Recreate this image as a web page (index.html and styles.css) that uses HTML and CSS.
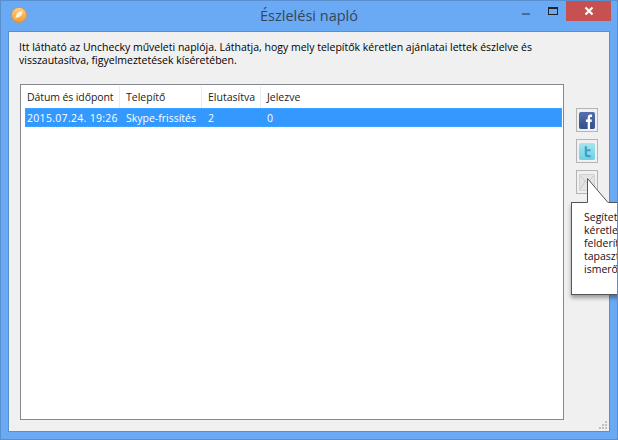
FILE: index.html
```html
<!DOCTYPE html>
<html lang="hu">
<head>
<meta charset="utf-8">
<title>Észlelési napló</title>
<link rel="stylesheet" href="styles.css">
</head>
<body>
<div class="window">
  <header class="titlebar">
    <svg class="app-icon" width="18" height="18" viewBox="0 0 18 18">
      <defs>
        <linearGradient id="org" x1="0" y1="0" x2="0" y2="1">
          <stop offset="0" stop-color="#fcd08a"/>
          <stop offset="1" stop-color="#f29a30"/>
        </linearGradient>
      </defs>
      <circle cx="9" cy="9" r="7.6" fill="url(#org)" stroke="#cf9148" stroke-width="0.8"/>
      <path d="M5.5 12.5C5.5 8 8 5.5 12.5 5C12.6 9 10.5 11.5 7 11.5L5.5 12.8Z" fill="#fdf0d8"/>
    </svg>
    <h1 class="title">Észlelési napló</h1>
    <div class="controls">
      <span class="ctl-min"></span>
      <span class="ctl-max"></span>
      <span class="ctl-close">
        <svg width="10" height="10" viewBox="0 0 10 10"><path d="M1.5 1.5L8.5 8.5M8.5 1.5L1.5 8.5" stroke="#fff" stroke-width="2.2"/></svg>
      </span>
    </div>
  </header>
  <main class="content">
    <p class="intro">Itt látható az Unchecky műveleti naplója. Láthatja, hogy mely telepítők kéretlen ajánlatai lettek észlelve és<br>visszautasítva, figyelmeztetések kíséretében.</p>
    <div class="body-row">
      <div class="list">
        <div class="list-head">
          <span class="col c1"><span class="date-head">Dátum és időpont</span></span>
          <span class="col c2">Telepítő</span>
          <span class="col c3">Elutasítva</span>
          <span class="col c4">Jelezve</span>
        </div>
        <div class="list-row">
          <span class="cell c1">2015.07.24. 19:26</span>
          <span class="cell c2">Skype-frissítés</span>
          <span class="cell c3">2</span>
          <span class="cell c4">0</span>
        </div>
      </div>
      <div class="social">
        <div class="social-btn">
          <svg width="16" height="17" viewBox="0 0 18 18" preserveAspectRatio="none">
            <defs><linearGradient id="fb" x1="0" y1="0" x2="0" y2="1"><stop offset="0" stop-color="#5470ac"/><stop offset="1" stop-color="#324f8e"/></linearGradient></defs>
            <rect width="18" height="18" rx="2" fill="url(#fb)"/>
            <path d="M9.8 18V10.6H7.8V7.9H9.8V6C9.8 3.8 11 2.7 13 2.7H14.6V5.3H13.5C12.7 5.3 12.4 5.7 12.4 6.4V7.9H14.5L14.2 10.6H12.4V18Z" fill="#fff"/>
          </svg>
        </div>
        <div class="social-btn">
          <svg width="16" height="17" viewBox="0 0 18 18" preserveAspectRatio="none">
            <defs><linearGradient id="tw" x1="0" y1="0" x2="0" y2="1"><stop offset="0" stop-color="#a5e5ee"/><stop offset="1" stop-color="#6fd0e2"/></linearGradient></defs>
            <rect width="18" height="18" rx="2" fill="url(#tw)"/>
            <path d="M6.5 3.5H9V6.5H13V8.8H9V11C9 12 9.6 12.6 10.6 12.6H13V15H9.8C7.6 15 6.5 13.8 6.5 11.8Z" fill="#3f9fc4"/>
          </svg>
        </div>
        <div class="social-btn">
          <svg width="16" height="17" viewBox="0 0 18 18" preserveAspectRatio="none">
            <rect x="0.5" y="0.5" width="17" height="17" rx="1" fill="#e4e4e4" stroke="#cfcfcf"/>
            <path d="M1 1.5L9 9.5L17 1.5M1 16.5L7 7.5M17 16.5L11 7.5" fill="none" stroke="#c4c4c4"/>
          </svg>
        </div>
      </div>
    </div>
    <div class="grip">
      <svg width="10" height="10" viewBox="0 0 10 10"><path d="M7 1h2v2H7zM4 4h2v2H4zM7 4h2v2H7zM1 7h2v2H1zM4 7h2v2H4zM7 7h2v2H7z" fill="#c0c0c0"/></svg>
    </div>
  </main>
  <aside class="tooltip">
    <div class="tip-text">Segítette<br>kéretlen<br>felderíteni<br>tapasztalat<br>ismerősei</div>
  </aside>
  <svg class="tip-tail" width="24" height="26" viewBox="0 0 24 26">
    <path d="M0.5 25.5V0.5L22 25.5Z" fill="#fff"/>
    <path d="M0.5 24.5V0.5L21 24.5" fill="none" stroke="#555" stroke-width="1"/>
  </svg>
</div>
</body>
</html>
```
FILE: styles.css
```css
* { box-sizing: border-box; }
html, body { margin: 0; padding: 0; width: 618px; height: 440px; overflow: hidden; }
body { font-family: "Open Sans", "Noto Sans", sans-serif; font-size: 10.5px; color: #000; }

.window {
  position: relative;
  width: 618px;
  height: 440px;
  background: #6aa9f4;
  border: 1px solid #5a8fcf;
  display: flex;
  flex-direction: column;
  padding: 0 7px 7px;
  overflow: hidden;
}

.titlebar {
  position: relative;
  height: 30px;
  flex: none;
  display: flex;
  justify-content: center;
}
.app-icon { position: absolute; left: 2px; top: 5px; }
.title {
  margin: 0;
  font-family: "Open Sans", sans-serif;
  font-size: 14.5px;
  font-weight: 400;
  line-height: 29px;
  color: #36465a;
}
.controls { position: absolute; right: -1px; top: 0; display: flex; align-items: flex-start; }
.ctl-min { width: 8px; height: 2px; background: #4a6a96; margin: 12px 18px 0 0; }
.ctl-max { width: 10px; height: 8px; border: 1px solid #222; border-top-width: 2px; margin: 6px 8px 0 0; }
.ctl-close {
  width: 45px;
  height: 20px;
  background: #c75050;
  display: flex;
  align-items: center;
  justify-content: center;
}

.content {
  position: relative;
  flex: 1;
  background: #f0f0f0;
  border: 1px solid #5a8fcf;
  padding: 9px 45px 11px 11px;
  display: flex;
  flex-direction: column;
  min-height: 0;
}
.intro { margin: 0 0 0 -1px; line-height: 13px; height: 43px; white-space: nowrap; }
.body-row { flex: 1; display: flex; min-height: 0; position: relative; }
.list {
  flex: 1;
  background: #fff;
  border: 1px solid #828790;
}
.list-head { display: flex; height: 23px; padding-top: 1px; white-space: nowrap; }
.col {
  display: flex;
  align-items: center;
  padding-left: 6px;
  border-right: 1px solid #e4ecf7;
  color: #222;
  height: 22px;
}
.c1 { width: 99px; }
.c2 { width: 82px; }
.c3 { width: 59px; }
.c4 { width: 80px; border-right: 0; }
.date-head { letter-spacing: -.1px; }
.list-row {
  display: flex;
  align-items: center;
  height: 19px;
  margin: 0 1px 0 4px;
  background: #3399ff;
  color: #fff;
  outline: 1px dotted #d98b3a;
  outline-offset: -1px;
  white-space: nowrap;
}
.cell { padding-left: 6px; }
.list-row .c1 { width: 95px; padding-left: 2px; letter-spacing: .3px; }

.social {
  position: absolute;
  right: -34px;
  top: 24px;
  display: flex;
  flex-direction: column;
  gap: 7px;
}
.social-btn {
  width: 22px;
  height: 24px;
  border: 1px solid #b4b4b4;
  display: flex;
  align-items: center;
  justify-content: center;
}

.grip { position: absolute; right: 1px; bottom: 1px; line-height: 0; }

.tooltip {
  position: absolute;
  left: 570px;
  top: 201px;
  width: 60px;
  height: 93px;
  background: #fff;
  border: 1px solid #555;
  box-shadow: 0 3px 4px rgba(0,0,0,.35);
  padding: 8px 0 0 12px;
  overflow: hidden;
}
.tip-text { line-height: 13px; white-space: nowrap; color: #2a0a12; }
.tip-tail { position: absolute; left: 586px; top: 177px; }
```
